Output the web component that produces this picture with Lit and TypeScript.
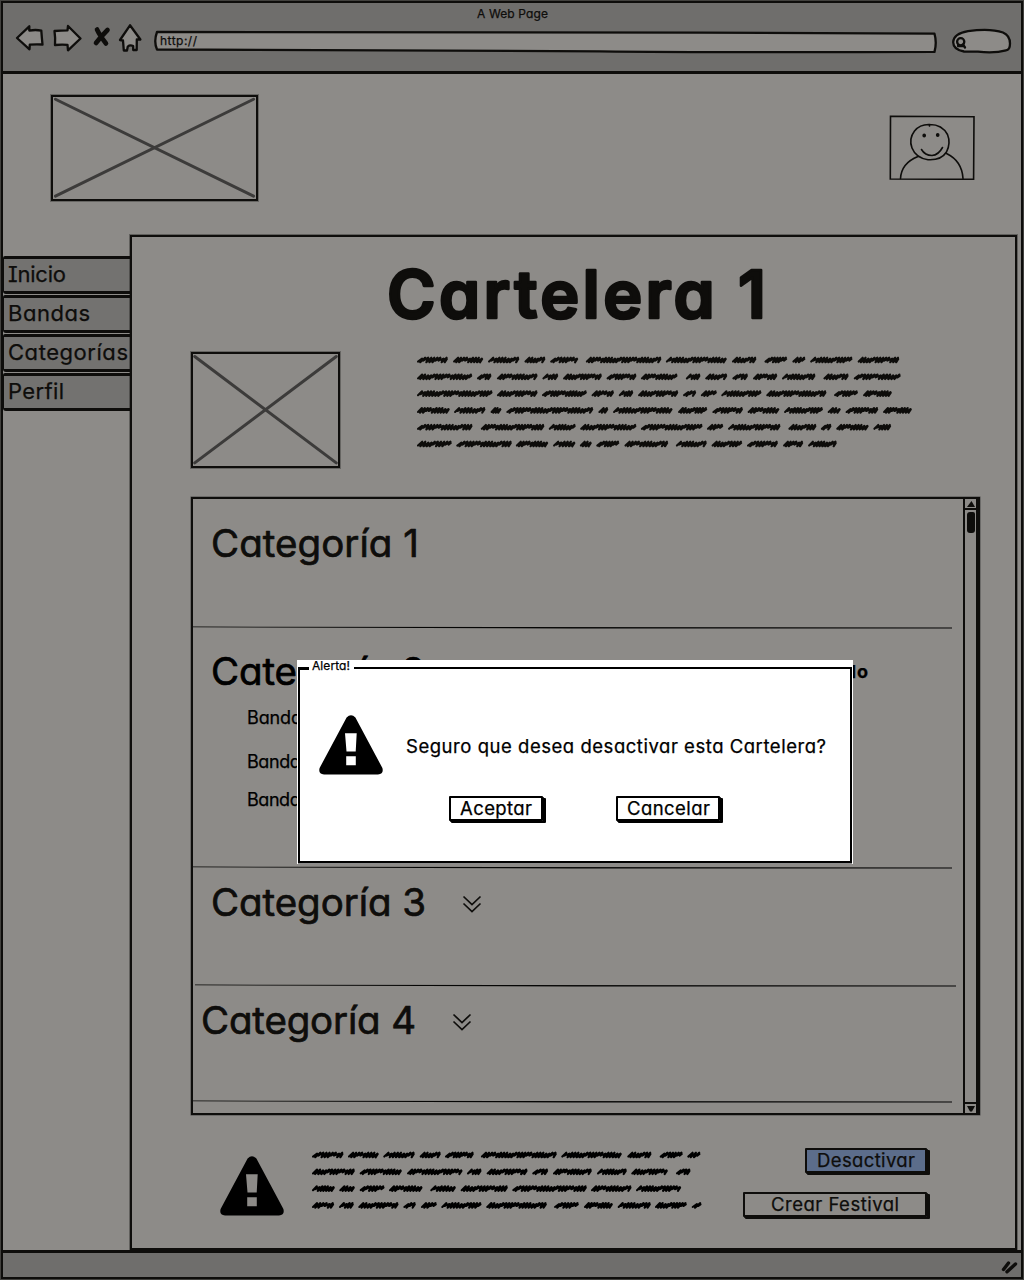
import { LitElement, html, svg, css } from "lit";
import { customElement, property } from "lit/decorators.js";

type Span = [number, number];

const INTRO: Span[][] = [
  [[0, 87], [101, 186], [199, 287], [301, 360], [373, 452], [473, 685], [697, 868], [882, 951], [973, 1037], [1051, 1088], [1101, 1220], [1234, 1351]],
  [[0, 155], [168, 209], [224, 338], [351, 396], [409, 518], [531, 615], [627, 730], [753, 794], [807, 869], [883, 927], [941, 1009], [1022, 1116], [1138, 1209], [1223, 1355]],
  [[0, 212], [224, 338], [350, 476], [489, 552], [565, 606], [619, 732], [745, 782], [795, 840], [852, 965], [978, 1147], [1168, 1235], [1249, 1330]],
  [[0, 92], [104, 192], [206, 237], [250, 494], [508, 536], [549, 716], [731, 813], [827, 913], [926, 1015], [1028, 1137], [1150, 1187], [1200, 1292], [1305, 1386]],
  [[0, 156], [179, 357], [369, 445], [457, 615], [627, 800], [812, 858], [871, 1018], [1040, 1119], [1131, 1161], [1174, 1265], [1278, 1328]],
  [[0, 98], [110, 266], [277, 368], [381, 444], [456, 490], [502, 567], [581, 704], [725, 812], [825, 911], [924, 1011], [1025, 1082], [1095, 1176]],
];

const NOTICE: Span[][] = [
  [[0, 95], [108, 201], [214, 309], [323, 387], [399, 486], [507, 735], [748, 930], [946, 1019], [1043, 1113], [1126, 1166]],
  [[0, 129], [143, 270], [285, 452], [465, 509], [524, 647], [661, 709], [723, 840], [855, 945], [958, 1068], [1092, 1136]],
  [[0, 69], [82, 129], [143, 218], [231, 332], [355, 432], [446, 588], [601, 825], [837, 959], [972, 1108]],
  [[0, 67], [81, 126], [139, 260], [274, 312], [327, 375], [388, 509], [523, 705], [726, 801], [816, 903], [917, 1017], [1029, 1125], [1139, 1169]],
];

/** One run of text whose box is exactly its cap height, so rows can be spaced by padding. */
const label = (text: string, width: number, size: number, cls = "") => {
  const cap = Math.round(size * 0.727);
  return html`<svg class="label ${cls}" width=${width} height=${cap}>
    <text x="0" y=${cap} font-size=${size} textLength=${width}>${text}</text>
  </svg>`;
};

const labelCss = css`
  .label {
    display: block;
    flex: none;
    overflow: visible;
    font-family: Inter, "Open Sans", sans-serif;
    font-feature-settings: "cv11", "cv08", "ss03";
    fill: currentColor;
    stroke: currentColor;
    stroke-width: 0.25px;
    stroke-linejoin: round;
  }
  .semi { stroke-width: 0.7px; }
  .heavy { font-weight: 600; stroke-width: 2.6px; }
  .bold { font-weight: 700; }
`;

@customElement("scribble-text")
class ScribbleText extends LitElement {
  @property({ attribute: false }) lines: Span[][] = [];
  @property({ type: Number }) unit = 3;

  static styles = css`
    :host { display: block; color: #0d0c0a; }
    svg { display: block; overflow: visible; }
    path {
      fill: none;
      stroke: currentColor;
      stroke-width: 2.1;
      stroke-linecap: round;
      stroke-linejoin: round;
    }
  `;

  private word([a, b]: Span, y: number, seed: number) {
    const x0 = a / this.unit + 1;
    const x1 = b / this.unit - 1.5;
    const n = Math.max(2, Math.round((x1 - x0) / 3.1));
    const step = (x1 - x0 - 1) / n;
    let d = `M${x0.toFixed(1)} ${y + 1.6}`;
    for (let i = 0; i < n; i++) {
      const x = x0 + i * step;
      const k = (seed * 7 + i * 5 + ((i * i) % 3)) % 4;
      const top = k === 0 ? -1.4 : -2.3;
      const low = k === 2 ? 0.6 : 2.3;
      d += `L${(x + step + 1).toFixed(1)} ${(y + top).toFixed(1)}L${(x + step - 0.9).toFixed(1)} ${(y + low).toFixed(1)}`;
    }
    d += `L${(x1 + 0.3).toFixed(1)} ${y - 1}`;
    return svg`<path d=${d}></path>`;
  }

  render() {
    return html`<svg width="500" height=${this.lines.length * 16.8}>
      ${this.lines.map((row, r) => row.map((w, i) => this.word(w, 4 + r * 16.8, r * 3 + i)))}
    </svg>`;
  }
}

@customElement("sketch-button")
class SketchButton extends LitElement {
  @property() text = "";
  @property({ type: Number }) textwidth = 80;

  static styles = [
    labelCss,
    css`
      :host { display: block; box-sizing: border-box; }
      .face {
        box-sizing: border-box;
        width: 100%;
        height: 25px;
        display: flex;
        align-items: center;
        justify-content: center;
        border: 2px solid currentColor;
        border-radius: 1px;
        background: var(--face, transparent);
        box-shadow: 1px 1px 0 currentColor, 2px 2px 0 currentColor, 3px 2px 0 currentColor;
        color: inherit;
        padding: 0;
      }
    `,
  ];

  render() {
    return html`<button class="face">${label(this.text, this.textwidth, 18.5)}</button>`;
  }
}

@customElement("image-box")
class ImageBox extends LitElement {
  static styles = css`
    :host {
      display: block;
      box-sizing: border-box;
      border: 2px solid #0e0d0b;
      box-shadow: 0 0 0 1px rgba(14, 13, 11, 0.3);
    }
    svg { display: block; width: 100%; height: 100%; }
    line { stroke: #3c3b3a; stroke-width: 3; stroke-linecap: round; }
  `;

  render() {
    return html`<svg>
      <line x1="1.2%" y1="2.2%" x2="98.8%" y2="97.2%"></line>
      <line x1="1.2%" y1="97.2%" x2="98.8%" y2="2.2%"></line>
    </svg>`;
  }
}

const warning = html`<svg class="warning" width="64" height="60" viewBox="0 0 64 60">
  <path fill-rule="evenodd" d="M27.6 2.6Q32-2 36.400 2.600L63.400 53Q65 59 59 59.400H5Q-1 59 .6 53ZM26 18.300L27.500 36.400H36.700L37.700 18.300ZM27.200 41.300V50.300H36.800V41.300Z"></path>
</svg>`;

const chevrons = html`<svg class="chevrons" width="20" height="18" viewBox="0 0 20 18">
  <path d="M1.500 1.500L10 9.500L18.500 1.500M1.500 8.500L10 16.500L18.500 8.500"></path>
</svg>`;

const rule = (width: number, offset = 0) => html`<svg class="rule" width="769" height="3">
  <path d="M${offset} .6L${offset + width} 1.500V2.400L${offset + width * 0.5} 2.500L${offset} 1.300Z"></path>
</svg>`;

@customElement("app-root")
class AppRoot extends LitElement {
  static styles = [
    labelCss,
    css`
      :host {
        --ink: #0e0d0b;
        display: block;
        position: relative;
        box-sizing: border-box;
        width: 1024px;
        height: 1280px;
        padding: 1px;
        background: #42413e;
        color: var(--ink);
        overflow: hidden;
      }
      * { box-sizing: border-box; }
      svg { display: block; flex: none; }
      .window {
        height: 1278px;
        border: 2px solid var(--ink);
        background: #8d8b88;
        display: flex;
        flex-direction: column;
      }
      .toolbar {
        height: 71px;
        flex: none;
        border-bottom: 3px solid var(--ink);
        background: #6f6e6c;
        padding-top: 6px;
      }
      .title { display: flex; justify-content: center; }
      .bar { display: flex; padding: 3px 10px 0 12px; }
      .nav { stroke: var(--ink); stroke-width: 2.3; fill: #8d8b88; stroke-linejoin: round; stroke-linecap: round; }
      .url { display: grid; }
      .url > * { grid-area: 1 / 1; }
      .url .label { margin: 15px 0 0 6px; }
      .header {
        height: 161px;
        flex: none;
        display: flex;
        justify-content: space-between;
        padding: 21px 46px 0 48px;
      }
      .logo { width: 207px; height: 106px; }
      .avatar {
        width: 86px;
        height: 65px;
        margin-top: 20px;
        fill: none;
        stroke: var(--ink);
        stroke-width: 1.6;
        stroke-linecap: round;
      }
      .main { height: 1015px; flex: none; display: flex; }
      .tabs { width: 127px; padding: 21px 0 0 0; display: flex; flex-direction: column; gap: 1px; }
      .tab {
        height: 38px;
        border: solid var(--ink);
        border-width: 3px 0 3px 1px;
        border-radius: 2px 0 0 3px;
        background: #737270;
        padding: 7px 0 0 4px;
      }
      .panel {
        width: 887px;
        border: 2px solid var(--ink);
        box-shadow: 0 0 0 1px rgba(14, 13, 11, 0.35);
        padding-left: 59px;
      }
      .heading { padding: 33px 0 0 196px; }
      .intro { display: flex; gap: 77px; padding-top: 34px; }
      .cover { width: 149px; height: 116px; }
      .copy { padding-top: 4px; }
      .list {
        margin-top: 29px;
        width: 789px;
        height: 618px;
        border: 2px solid var(--ink);
        box-shadow: 0 0 0 0.5px rgba(14, 13, 11, 0.5);
        display: flex;
        justify-content: space-between;
      }
      .rows { width: 769px; }
      .row { display: flex; flex-direction: column; justify-content: space-between; }
      .first { height: 130px; padding-top: 30px; }
      .second { height: 240px; padding-top: 28px; color: #000; }
      .third { height: 118px; padding-top: 19px; }
      .fourth { height: 116px; padding-top: 19px; }
      .name { display: flex; align-items: center; gap: 36px; padding-left: 18px; }
      .fourth .name { padding-left: 8px; }
      .state { padding-left: 341px; }
      .bands { display: flex; flex-direction: column; padding: 26px 0 0 54px; }
      .bands .label + .label { margin-top: 31px; }
      .bands .label + .label + .label { margin-top: 25px; }
      .rule { fill: #050504; }
      .chevrons { fill: none; stroke: var(--ink); stroke-width: 1.7; margin-top: 4px; }
      .scroll {
        width: 15px;
        border-left: 2px solid var(--ink);
        border-right: 2px solid var(--ink);
        display: flex;
        flex-direction: column;
        align-items: center;
      }
      .arrow { fill: var(--ink); stroke: none; }
      .thumb { width: 8px; height: 21px; border-radius: 3px 2px 3px 3px; background: var(--ink); margin-top: 2px; }
      .grow { flex: 1; }
      .step { border-bottom: 2px solid var(--ink); width: 100%; height: 11px; display: flex; justify-content: center; padding-top: 2px; }
      .down { border-bottom: 0; border-top: 2px solid var(--ink); }
      .footer { display: flex; padding: 33px 0 0 29px; }
      .footer .warning { margin-top: 8px; }
      .notice { width: 459px; flex: none; padding: 3px 0 0 28px; }
      .notice scribble-text { color: #000; }
      .actions { display: flex; flex-direction: column; align-items: flex-end; gap: 19px; width: 184px; flex: none; }
      .off { width: 122px; --face: #5c6d8b; }
      .create { width: 184px; }
      .status {
        flex: 1;
        border-top: 3px solid var(--ink);
        background: #6f6e6c;
        display: flex;
        justify-content: flex-end;
        padding: 7px 3px 0 0;
      }
      .grip { stroke: var(--ink); stroke-width: 3.4; stroke-linecap: round; }

      /* The dialog floats over the page. */
      .dialog {
        position: absolute;
        left: 297px;
        top: 660px;
        width: 556px;
        height: 204px;
        background: #fff;
        color: #000;
        padding: 0 1px 1px;
      }
      .legend { display: flex; align-items: center; height: 14px; }
      .legend .label { margin: -3px 4px 0 3px; }
      .stub { width: 11px; height: 3px; background: #000; margin-top: 2px; }
      .line { flex: 1; height: 2px; background: #000; margin-top: 2px; }
      .frame { height: 196px; margin-top: -7px; border: 2px solid #000; border-top: 0; box-shadow: 0 1px 0 rgba(0, 0, 0, 0.45); padding: 48px 0 0 19px; }
      .message { display: flex; align-items: center; gap: 23px; }
      .message .label { margin-top: 2px; }
      .choices { display: flex; gap: 73px; padding: 21px 0 0 130px; }
      .accept { width: 94px; }
      .cancel { width: 104px; }
    `,
  ];

  render() {
    return html`
      <div class="window">
        <div class="toolbar">
          <div class="title">${label("A Web Page", 71, 12)}</div>
          <div class="bar">
            <svg class="nav" width="139" height="36" viewBox="15 20 139 36">
              <path d="M17 37L29.300 25.300V29.600Q36 28.400 41.300 29.700Q41.800 37 42.500 43.500Q36 43.200 29.800 43.600L29.500 48.300Z"></path>
              <path d="M54.500 30Q61 29.500 67.500 29.300L68 25L80.500 37.500L68 49.300L67.500 43.800Q61 43.300 55 44Q55.500 37 54.500 30Z"></path>
              <path d="M97 28.500Q99.500 34 106 42.500M107.500 29Q100.500 36 96 42" stroke-width="4.600" fill="none"></path>
              <path d="M130 24.300L140.400 38.500H136.800L136.700 49H133.200V45Q130 43.500 127.800 45.500L127 49.500H123.800L123 39.500L120 39Z"></path>
            </svg>
            <div class="url">
              <svg class="nav" width="798" height="36" viewBox="154 20.500 798 36">
                <path d="M157 31.500Q550 31.500 700 32.200Q850 33.200 934.500 33.200Q937 42 934.500 51.400Q700 52 600 50.800Q400 49.500 157 49Q153.500 41 157 31.500Z"></path>
              </svg>
              ${label("http://", 37, 12)}
            </div>
            <svg class="nav" width="60" height="36" viewBox="952 20.500 60 36">
              <path d="M968 30.700Q990 27.600 1003 32Q1010 35 1010 43Q1010 49.500 1006 49.800Q995 53 978 51.200L964 51Q953 49 953.200 41.500Q954 33 968 30.700Z"></path>
              <circle cx="960.700" cy="41.300" r="3.600"></circle>
              <path d="M963 44L965 47M958 45.500H963"></path>
            </svg>
          </div>
        </div>

        <div class="header">
          <image-box class="logo"></image-box>
          <svg class="avatar" viewBox="0 0 86 65">
            <path d="M1.500 1.300L85 1.700L84.600 64.300L1.300 64Z"></path>
            <path d="M41 9.500Q31 9 25.500 16Q19.500 24 23 33Q27 43 39 44.700Q52 45.500 57.500 37Q62 28 58.500 19.500Q53 9.500 41 9.500Q40 9.500 40.500 11"></path>
            <path d="M29 41.500Q12.500 48 11.500 63.500M57.500 38.500Q73 46 74 63.500M32.500 34.500Q36 40.500 43 40.500Q49.500 40 53.500 32.500"></path>
            <path d="M35.200 20.300V20.700M48.700 19.800V20.200" stroke-width="3.600"></path>
          </svg>
        </div>

        <div class="main">
          <nav class="tabs">
            <div class="tab">${label("Inicio", 58, 22)}</div>
            <div class="tab">${label("Bandas", 82, 22)}</div>
            <div class="tab">${label("Categorías", 120, 22)}</div>
            <div class="tab">${label("Perfil", 56, 22)}</div>
          </nav>
          <div class="panel">
            <div class="heading">${label("Cartelera 1", 379, 66, "heavy")}</div>
            <div class="intro">
              <image-box class="cover"></image-box>
              <div class="copy"><scribble-text .lines=${INTRO} unit="2.8"></scribble-text></div>
            </div>
            <div class="list">
              <div class="rows">
                <div class="row first">
                  <div class="name">${label("Categoría 1", 208, 38.5, "semi")}</div>
                  ${rule(759)}
                </div>
                <div class="row second">
                  <div>
                    <div class="name">
                      ${label("Categoría 2", 214, 38.5, "semi")}
                      <div class="state">${label("Estado", 66, 18, "bold")}</div>
                    </div>
                    <div class="bands">
                      ${label("Banda 1", 67, 18)} ${label("Banda 2", 69, 18)} ${label("Banda 3", 69, 18)}
                    </div>
                  </div>
                  ${rule(759)}
                </div>
                <div class="row third">
                  <div class="name">${label("Categoría 3", 215, 38.5, "semi")}${chevrons}</div>
                  ${rule(761, 2)}
                </div>
                <div class="row fourth">
                  <div class="name">${label("Categoría 4", 215, 38.5, "semi")}${chevrons}</div>
                  ${rule(759)}
                </div>
              </div>
              <div class="scroll">
                <div class="step"><svg class="arrow" width="8" height="6"><path d="M4.500 0L8 6H0Z"></path></svg></div>
                <div class="thumb"></div>
                <div class="grow"></div>
                <div class="step down"><svg class="arrow" width="8" height="6"><path d="M0 0H8L5 5.500H3Z"></path></svg></div>
              </div>
            </div>
            <div class="footer">
              ${warning}
              <div class="notice"><scribble-text .lines=${NOTICE}></scribble-text></div>
              <div class="actions">
                <sketch-button class="off" text="Desactivar" textwidth="98"></sketch-button>
                <sketch-button class="create" text="Crear Festival" textwidth="128"></sketch-button>
              </div>
            </div>
          </div>
        </div>

        <div class="status">
          <svg class="grip" width="17" height="14" viewBox="0 0 17 14">
            <path d="M2.500 9.500L7.500 3M6 11.800L14.500 4"></path>
          </svg>
        </div>
      </div>

      <div class="dialog" role="alertdialog">
        <div class="legend">
          <div class="stub"></div>
          ${label("Alerta!", 38, 12)}
          <div class="line"></div>
        </div>
        <div class="frame">
          <div class="message">${warning}${label("Seguro que desea desactivar esta Cartelera?", 420, 18.5)}</div>
          <div class="choices">
            <sketch-button class="accept" text="Aceptar" textwidth="72"></sketch-button>
            <sketch-button class="cancel" text="Cancelar" textwidth="83"></sketch-button>
          </div>
        </div>
      </div>
    `;
  }
}
